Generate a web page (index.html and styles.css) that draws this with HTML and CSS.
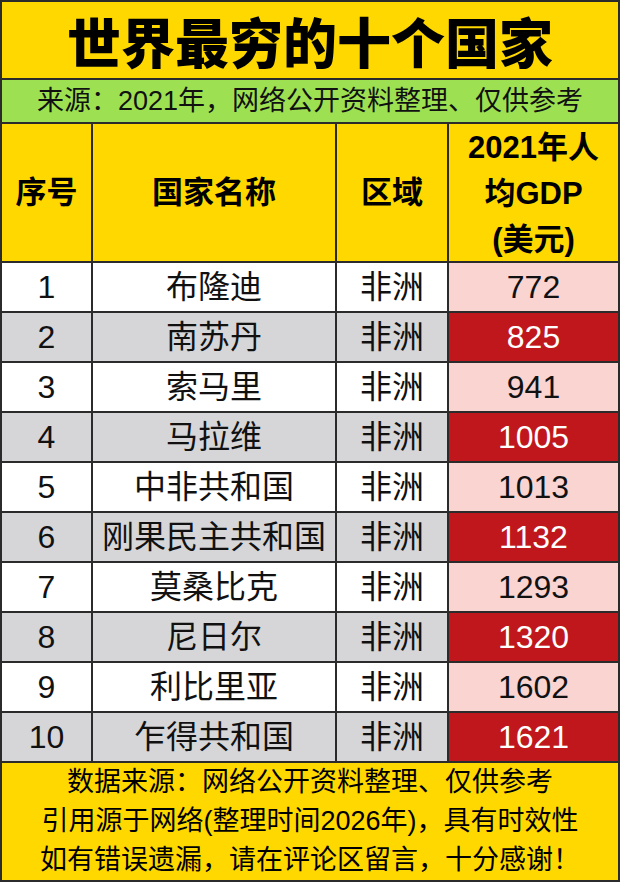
FILE: index.html
```html
<!DOCTYPE html>
<html lang="zh-CN">
<head>
<meta charset="utf-8">
<title>世界最穷的十个国家</title>
<link rel="stylesheet" href="styles.css">
</head>
<body>
<div class="sheet">
  <div class="cell title">世界最穷的十个国家</div>
  <div class="cell subtitle">来源：2021年，网络公开资料整理、仅供参考</div>

  <div class="cell head">序号</div>
  <div class="cell head">国家名称</div>
  <div class="cell head">区域</div>
  <div class="cell head gdp-head">2021年人<br>均GDP<br>(美元)</div>

  <div class="cell">1</div><div class="cell">布隆迪</div><div class="cell">非洲</div><div class="cell pink">772</div>
  <div class="cell gray">2</div><div class="cell gray">南苏丹</div><div class="cell gray">非洲</div><div class="cell red">825</div>
  <div class="cell">3</div><div class="cell">索马里</div><div class="cell">非洲</div><div class="cell pink">941</div>
  <div class="cell gray">4</div><div class="cell gray">马拉维</div><div class="cell gray">非洲</div><div class="cell red">1005</div>
  <div class="cell">5</div><div class="cell">中非共和国</div><div class="cell">非洲</div><div class="cell pink">1013</div>
  <div class="cell gray">6</div><div class="cell gray">刚果民主共和国</div><div class="cell gray">非洲</div><div class="cell red">1132</div>
  <div class="cell">7</div><div class="cell">莫桑比克</div><div class="cell">非洲</div><div class="cell pink">1293</div>
  <div class="cell gray">8</div><div class="cell gray">尼日尔</div><div class="cell gray">非洲</div><div class="cell red">1320</div>
  <div class="cell">9</div><div class="cell">利比里亚</div><div class="cell">非洲</div><div class="cell pink">1602</div>
  <div class="cell gray">10</div><div class="cell gray">乍得共和国</div><div class="cell gray">非洲</div><div class="cell red">1621</div>

  <div class="cell footer">
    <div>数据来源：网络公开资料整理、仅供参考</div>
    <div>引用源于网络(整理时间2026年)，具有时效性</div>
    <div>如有错误遗漏，请在评论区留言，十分感谢！</div>
  </div>
</div>
</body>
</html>
```

FILE: styles.css
```css
html, body {
  margin: 0;
  padding: 0;
  background: #ffffff;
}

.sheet {
  width: 620px;
  height: 882px;
  box-sizing: border-box;
  padding: 2px;
  background: #2b2b2b;
  display: grid;
  grid-template-columns: 89px 242px 110px 169px;
  grid-template-rows: 76px 42px 137px repeat(10, 48px) 117px;
  gap: 2px;
  font-family: "Liberation Sans", "Noto Sans CJK SC", sans-serif;
  color: #111;
}

.cell {
  background: #ffffff;
  display: flex;
  align-items: center;
  justify-content: center;
  text-align: center;
  font-size: 32px;
  line-height: 1;
  white-space: nowrap;
}

.title {
  grid-column: 1 / -1;
  background: #ffd800;
  font-family: "Noto Sans CJK SC", sans-serif;
  font-weight: 900;
  font-size: 54px;
  color: #000;
  padding-top: 2px;
}

.subtitle {
  grid-column: 1 / -1;
  background: #9de152;
  font-size: 27px;
  padding-top: 1px;
}

.head {
  background: #ffd800;
  font-weight: bold;
  font-size: 31px;
  color: #000;
}

.gdp-head {
  line-height: 46px;
  padding-top: 2px;
}

.gray {
  background: #d6d6d8;
}

.pink {
  background: #f9d4d1;
}

.red {
  background: #c0171c;
  color: #ffffff;
}

.footer {
  grid-column: 1 / -1;
  background: #ffd800;
  flex-direction: column;
  font-size: 27px;
  line-height: 39px;
  color: #000;
}
```
